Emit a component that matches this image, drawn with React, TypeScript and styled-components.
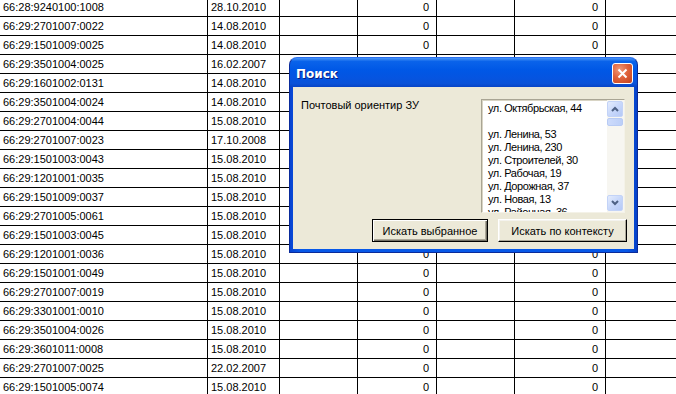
import React from "react";
import styled, { createGlobalStyle } from "styled-components";

const GlobalStyle = createGlobalStyle`
  html, body {
    margin: 0;
    padding: 0;
    background: #ffffff;
    overflow: hidden;
  }
  body {
    font-family: "Liberation Sans", Arial, sans-serif;
    font-size: 11px;
    color: #000;
  }
`;

const Page = styled.div`
  position: relative;
  width: 676px;
  height: 394px;
  overflow: hidden;
`;

const Sheet = styled.div`
  margin-top: -2px;
`;

const Row = styled.div`
  display: grid;
  grid-template-columns: 208px 72px 78px 79px 78px 91px 70px;
  height: 19px;
  box-sizing: border-box;
  border-bottom: 1px solid #000;
`;

const Cell = styled.div<{ $align?: "left" | "right"; $last?: boolean }>`
  box-sizing: border-box;
  border-right: ${p => (p.$last ? "none" : "1px solid #000")};
  padding: 1px ${p => (p.$align === "right" ? "7px" : "3px")} 0 3px;
  line-height: 17px;
  text-align: ${p => p.$align ?? "left"};
  white-space: nowrap;
  overflow: hidden;
`;

const Window = styled.div`
  position: absolute;
  left: 289px;
  top: 57px;
  width: 349px;
  height: 196px;
  box-sizing: border-box;
  display: flex;
  flex-direction: column;
  background: linear-gradient(90deg, #0843d0 0%, #0758e8 3%, #0758e8 97%, #0541c8 100%);
  border: 1px solid #0a2b9a;
  border-top-color: #2b71f0;
  border-radius: 8px 8px 0 0;
  overflow: hidden;
`;

const TitleBar = styled.div`
  height: 29px;
  flex: none;
  display: flex;
  align-items: center;
  justify-content: space-between;
  padding: 0 4px 0 6px;
  background: linear-gradient(
    180deg,
    #4a95f6 0%,
    #0a63ea 12%,
    #0058e6 40%,
    #0554e0 70%,
    #0a52d8 88%,
    #0744c6 100%
  );
`;

const Title = styled.span`
  font-family: "DejaVu Sans", "Liberation Sans", sans-serif;
  font-weight: bold;
  font-size: 12px;
  color: #ffffff;
  text-shadow: 1px 1px 0 #0a1e80;
  padding-top: 2px;
`;

const CloseButton = styled.div`
  width: 21px;
  height: 21px;
  box-sizing: border-box;
  border: 1px solid #ffffff;
  border-radius: 3px;
  background: radial-gradient(circle at 35% 30%, #f09a7a 0%, #e0633c 45%, #c2411d 100%);
  display: flex;
  align-items: center;
  justify-content: center;
  margin-top: 2px;
`;

const Body = styled.div`
  flex: 1;
  margin: 0 3px 3px 3px;
  background: #ece9d8;
  display: flex;
  flex-direction: column;
  padding: 12px 8px 0 8px;
`;

const TopRow = styled.div`
  display: flex;
  justify-content: space-between;
  align-items: flex-start;
`;

const Label = styled.span`
  font-family: "Liberation Sans", Arial, sans-serif;
  font-size: 11px;
  line-height: 13px;
`;

const ListBox = styled.div`
  width: 144px;
  height: 114px;
  box-sizing: border-box;
  border: 1px solid #a9a594;
  border-right-color: #f4f2e8;
  border-bottom-color: #f4f2e8;
  box-shadow: inset 1px 1px 0 #d8d4c4;
  background: #ffffff;
  display: flex;
  margin-right: 1px;
  overflow: hidden;
`;

const Items = styled.div`
  flex: 1;
  padding: 2px 0 0 6px;
  font-family: "Liberation Sans", Arial, sans-serif;
  font-size: 11px;
  letter-spacing: -0.4px;
  line-height: 13px;
  white-space: nowrap;
  overflow: hidden;
`;

const Item = styled.div`
  height: 13px;
`;

const ScrollBar = styled.div`
  width: 17px;
  display: flex;
  flex-direction: column;
  background: #f7f6f1;
  padding: 1px 1px 1px 0;
  box-sizing: border-box;
`;

const Arrow = styled.div`
  width: 16px;
  height: 16px;
  box-sizing: border-box;
  border: 1px solid #c3d3f7;
  border-radius: 2px;
  background: linear-gradient(135deg, #e4ecfd 0%, #c8d8fb 50%, #b5c9f6 100%);
  display: flex;
  align-items: center;
  justify-content: center;
  flex: none;
`;

const Thumb = styled.div`
  width: 16px;
  height: 8px;
  margin-top: 1px;
  box-sizing: border-box;
  border: 1px solid #b8cbf4;
  border-radius: 2px;
  background: linear-gradient(90deg, #cddbfb, #bccff8);
`;

const Track = styled.div`
  flex: 1;
`;

const ButtonRow = styled.div`
  display: flex;
  justify-content: flex-end;
  gap: 10px;
  margin-top: 6px;
  margin-right: -1px;
`;

const Button = styled.div<{ $default?: boolean; $width: number }>`
  width: ${p => p.$width}px;
  height: 23px;
  box-sizing: border-box;
  background: #ece9d8;
  border: 1px solid ${p => (p.$default ? "#000000" : "#ffffff")};
  border-right-color: #000000;
  border-bottom-color: #000000;
  box-shadow: ${p =>
    p.$default
      ? "inset 1px 1px 0 #ffffff, inset -1px -1px 0 #716f64, inset -2px -2px 0 #aca899"
      : "inset -1px -1px 0 #aca899, inset 1px 1px 0 #f4f3ee"};
  display: flex;
  align-items: center;
  justify-content: center;
  font-family: "Liberation Sans", Arial, sans-serif;
  font-size: 11px;
`;

const rows: [string, string][] = [
  ["66:28:9240100:1008", "28.10.2010"],
  ["66:29:2701007:0022", "14.08.2010"],
  ["66:29:1501009:0025", "14.08.2010"],
  ["66:29:3501004:0025", "16.02.2007"],
  ["66:29:1601002:0131", "14.08.2010"],
  ["66:29:3501004:0024", "14.08.2010"],
  ["66:29:2701004:0044", "15.08.2010"],
  ["66:29:2701007:0023", "17.10.2008"],
  ["66:29:1501003:0043", "15.08.2010"],
  ["66:29:1201001:0035", "15.08.2010"],
  ["66:29:1501009:0037", "15.08.2010"],
  ["66:29:2701005:0061", "15.08.2010"],
  ["66:29:1501003:0045", "15.08.2010"],
  ["66:29:1201001:0036", "15.08.2010"],
  ["66:29:1501001:0049", "15.08.2010"],
  ["66:29:2701007:0019", "15.08.2010"],
  ["66:29:3301001:0010", "15.08.2010"],
  ["66:29:3501004:0026", "15.08.2010"],
  ["66:29:3601011:0008", "15.08.2010"],
  ["66:29:2701007:0025", "22.02.2007"],
  ["66:29:1501005:0074", "15.08.2010"],
];

const streets = [
  "ул. Октябрьская, 44",
  "",
  "ул. Ленина, 53",
  "ул. Ленина, 230",
  "ул. Строителей, 30",
  "ул. Рабочая, 19",
  "ул. Дорожная, 37",
  "ул. Новая, 13",
  "ул. Районная, 36",
];

const Chevron = ({ up }: { up?: boolean }) => (
  <svg width="8" height="6" viewBox="0 0 8 6">
    <path
      d={up ? "M1 5 L4 2 L7 5" : "M1 1 L4 4 L7 1"}
      fill="none"
      stroke="#4d6185"
      strokeWidth="2"
    />
  </svg>
);

export default function App() {
  return (
    <Page>
      <GlobalStyle />
      <Sheet>
        {rows.map(([num, date]) => (
          <Row key={num + date}>
            <Cell>{num}</Cell>
            <Cell>{date}</Cell>
            <Cell />
            <Cell $align="right">0</Cell>
            <Cell />
            <Cell $align="right">0</Cell>
            <Cell $last />
          </Row>
        ))}
      </Sheet>

      <Window>
        <TitleBar>
          <Title>Поиск</Title>
          <CloseButton>
            <svg width="11" height="11" viewBox="0 0 11 11">
              <path d="M1.5 1.5 L9.5 9.5 M9.5 1.5 L1.5 9.5" stroke="#ffffff" strokeWidth="2" />
            </svg>
          </CloseButton>
        </TitleBar>
        <Body>
          <TopRow>
            <Label>Почтовый ориентир ЗУ</Label>
            <ListBox>
              <Items>
                {streets.map((s, i) => (
                  <Item key={i}>{s}</Item>
                ))}
              </Items>
              <ScrollBar>
                <Arrow>
                  <Chevron up />
                </Arrow>
                <Thumb />
                <Track />
                <Arrow>
                  <Chevron />
                </Arrow>
              </ScrollBar>
            </ListBox>
          </TopRow>
          <ButtonRow>
            <Button $default $width={116}>Искать выбранное</Button>
            <Button $width={129}>Искать по контексту</Button>
          </ButtonRow>
        </Body>
      </Window>
    </Page>
  );
}
